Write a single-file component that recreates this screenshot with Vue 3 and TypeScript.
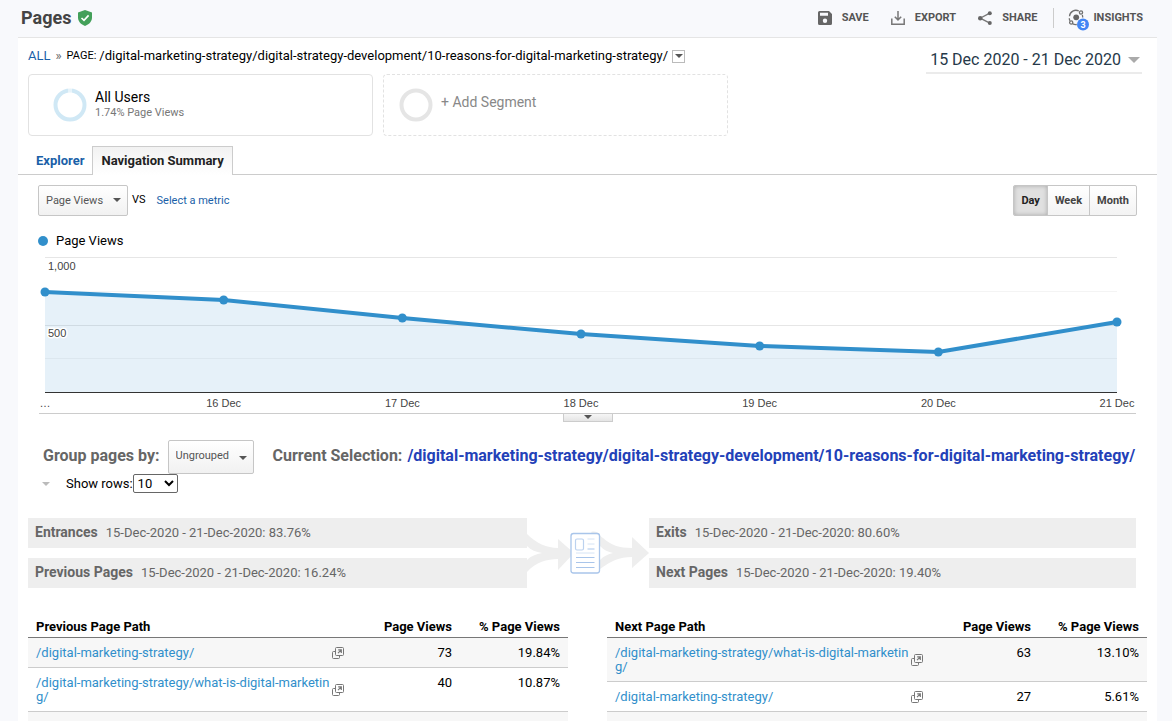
<script setup lang="ts">
import { ref } from 'vue'

interface PageRow {
  path: string
  views: string
  share: string
}

interface PathTable {
  title: string
  rows: PageRow[]
}

const pagePath = '/digital-marketing-strategy/digital-strategy-development/10-reasons-for-digital-marketing-strategy/'
const period = ref('Day')
const periods = ['Day', 'Week', 'Month']

const points = [
  { label: '…', y: 35 },
  { label: '16 Dec', y: 43 },
  { label: '17 Dec', y: 61 },
  { label: '18 Dec', y: 77 },
  { label: '19 Dec', y: 89 },
  { label: '20 Dec', y: 95 },
  { label: '21 Dec', y: 65 },
]
const steps = points.length - 1
const line = points.map((p, i) => `${i},${p.y}`).join(' ')
const area = `0,135 ${line} ${steps},135`
const xAt = (i: number): string => `${(i / steps) * 100}%`

const inbound = [
  { name: 'Entrances', value: '15-Dec-2020 - 21-Dec-2020: 83.76%' },
  { name: 'Previous Pages', value: '15-Dec-2020 - 21-Dec-2020: 16.24%' },
]
const outbound = [
  { name: 'Exits', value: '15-Dec-2020 - 21-Dec-2020: 80.60%' },
  { name: 'Next Pages', value: '15-Dec-2020 - 21-Dec-2020: 19.40%' },
]

const tables: PathTable[] = [
  {
    title: 'Previous Page Path',
    rows: [
      { path: '/digital-marketing-strategy/', views: '73', share: '19.84%' },
      { path: '/digital-marketing-strategy/what-is-digital-marketing/', views: '40', share: '10.87%' },
      { path: '', views: '', share: '' },
    ],
  },
  {
    title: 'Next Page Path',
    rows: [
      { path: '/digital-marketing-strategy/what-is-digital-marketing/', views: '63', share: '13.10%' },
      { path: '/digital-marketing-strategy/', views: '27', share: '5.61%' },
    ],
  },
]
</script>

<template>
  <div class="app">
    <header class="topbar">
      <h1>Pages</h1>
      <svg class="shield" width="16" height="18" viewBox="0 0 16 18">
        <path d="M8 1 15 3.6V8.500c0 4-3 7-7 8.500-4-1.500-7-4.500-7-8.500V3.600z" fill="#43a05a" />
        <path d="m4.500 9 2.500 2.400 4.600-5" fill="none" stroke="#fff" stroke-width="1.600" />
      </svg>
      <nav class="actions">
        <button type="button" class="action">
          <svg width="14" height="14" viewBox="0 0 14 14">
            <path fill-rule="evenodd" fill="#666" d="M1.500 0H11l3 3v9.500A1.500 1.500 0 0 1 12.500 14h-11A1.500 1.500 0 0 1 0 12.500v-11A1.500 1.500 0 0 1 1.500 0zM2 1.800v3h8v-3zM7 7.500a2.200 2.200 0 1 0 0 4.400 2.200 2.200 0 0 0 0-4.400z" />
          </svg>
          SAVE
        </button>
        <button type="button" class="action">
          <svg width="14" height="14" viewBox="0 0 14 14" fill="none" stroke="#777" stroke-width="1.500">
            <path d="M.8 7.500v5.700h12.400V7.500" />
            <path d="M7 0v8.500M3.800 5.700 7 8.900l3.200-3.200" />
          </svg>
          EXPORT
        </button>
        <button type="button" class="action">
          <svg width="14" height="14" viewBox="0 0 14 14">
            <path d="M11.800 2.200 2.200 7.200l9.600 4.900" fill="none" stroke="#777" stroke-width="1.300" />
            <g fill="#666">
              <circle cx="11.800" cy="2.200" r="2" />
              <circle cx="2.200" cy="7.200" r="2.200" />
              <circle cx="11.800" cy="12" r="2" />
            </g>
          </svg>
          SHARE
        </button>
        <button type="button" class="action insights">
          <svg width="22" height="22" viewBox="0 0 22 22">
            <g fill="none" stroke="#707070" stroke-width="1.300">
              <path d="M1.500 7.200A6.400 6.400 0 0 1 10.800 2M1.300 9.200a6.500 6.500 0 0 0 .6 2.500M4.800 14.900a6.200 6.200 0 0 0 4 .6M14.300 6a6.500 6.500 0 0 1 .4 2.500" />
              <circle cx="13" cy="3.500" r="1.600" />
              <circle cx="3.200" cy="13.500" r="1.600" />
            </g>
            <circle cx="8.200" cy="8.300" r="2.900" fill="#666" />
            <circle cx="15" cy="15.500" r="6" fill="#4285f4" />
            <text x="15" y="19" text-anchor="middle" class="count">3</text>
          </svg>
          INSIGHTS
        </button>
      </nav>
    </header>

    <main class="card">
      <div class="intro">
        <div class="intro-main">
          <div class="crumbs">
            <a href="#">ALL</a>
            <span class="sep">»</span>
            <span class="kind">PAGE:</span>
            <span>{{ pagePath }}</span>
            <button type="button" class="crumb-menu" aria-label="Change page"><i class="tri" /></button>
          </div>
          <div class="segments">
            <div class="segment">
              <svg width="34" height="34" viewBox="0 0 34 34">
                <circle cx="17" cy="17" r="14.500" fill="none" stroke="#d0e8f5" stroke-width="4" />
                <path d="M16 0v5M18 0v5" stroke="#fff" stroke-width="1" />
              </svg>
              <div class="segment-text">
                <div>All Users</div>
                <div class="segment-note">1.74% Page Views</div>
              </div>
            </div>
            <button type="button" class="segment add">
              <svg width="34" height="34" viewBox="0 0 34 34">
                <circle cx="17" cy="17" r="14.500" fill="none" stroke="#e5e5e5" stroke-width="4" />
              </svg>
              <span>+ Add Segment</span>
            </button>
          </div>
        </div>
        <button type="button" class="date">15 Dec 2020 - 21 Dec 2020<i class="tri" /></button>
      </div>

      <nav class="tabs">
        <a href="#" class="tab">Explorer</a>
        <a href="#" class="tab current">Navigation Summary</a>
      </nav>

      <div class="controls">
        <span class="picker">
          <select class="metric" aria-label="Metric"><option>Page Views</option></select>
        </span>
        <span class="vs">VS</span>
        <a href="#" class="compare">Select a metric</a>
        <div class="periods">
          <button v-for="p in periods" :key="p" type="button" :class="{ on: p === period }" @click="period = p">{{ p }}</button>
        </div>
      </div>

      <div class="legend"><i class="dot" />Page Views</div>

      <section class="chart">
        <svg class="plot" width="100%" height="154">
          <g>
            <line x1="0" x2="100%" y1=".5" y2=".5" stroke="#e6e6e6" />
            <line x1="0" x2="100%" y1="34.500" y2="34.500" stroke="#f4f4f4" />
            <line x1="0" x2="100%" y1="68.500" y2="68.500" stroke="#e6e6e6" />
            <line x1="0" x2="100%" y1="101.500" y2="101.500" stroke="#f4f4f4" />
          </g>
          <svg width="100%" height="135" :viewBox="`0 0 ${steps} 135`" preserveAspectRatio="none" overflow="visible">
            <polygon :points="area" fill="#318fcb" fill-opacity=".12" />
            <polyline :points="line" fill="none" stroke="#318fcb" stroke-width="4" vector-effect="non-scaling-stroke" />
          </svg>
          <line x1="0" x2="100%" y1="135.500" y2="135.500" stroke="#333" />
          <g v-for="(p, i) in points" :key="p.label">
            <circle :cx="xAt(i)" :cy="p.y" r="4.500" fill="#318fcb" />
            <text :x="xAt(i)" y="150" text-anchor="middle">{{ p.label }}</text>
          </g>
          <text class="halo" x="3" y="13">1,000</text>
          <text class="halo" x="3" y="80">500</text>
        </svg>
      </section>
      <div class="fold">
        <button type="button" aria-label="Expand chart"><i class="tri" /></button>
      </div>

      <div class="grouping">
        <label for="group">Group pages by:</label>
        <span class="picker tall">
          <select id="group"><option>Ungrouped</option></select>
        </span>
        <span class="selection-label">Current Selection:</span>
        <span class="selection">{{ pagePath }}</span>
      </div>
      <div class="rows-line">
        <i class="tri" />
        <label for="rows">Show rows:</label>
        <select id="rows"><option>10</option><option>25</option></select>
      </div>

      <section class="flow">
        <div class="bars inbound">
          <div v-for="b in inbound" :key="b.name" class="bar"><strong>{{ b.name }}</strong>{{ b.value }}</div>
        </div>
        <svg class="arrows" width="122" height="70" viewBox="0 0 122 70">
          <g fill="#eee">
            <path d="M0 16C9 25 20 30 31 30V21L47 35 31 52V41C20 41 9 44 0 54V42C4 38 9 36 15 35 9 34 4 32 0 28z" />
            <path d="M64 14C72 12 72 18 76 20 84 27 92 30 105 30V19L122 35 105 50V39C92 39 84 43 73 51V42C77 38 81 36 86 35 81 34 77 32 73 28z" />
          </g>
          <rect x="44" y="15.500" width="28.500" height="39.500" rx="2.500" fill="#fff" stroke="#a9c5ea" stroke-width="1.300" />
          <rect x="48.500" y="21" width="8" height="11" rx="1.500" fill="none" stroke="#bcd2ef" stroke-width="1.200" />
          <path d="M60.500 21h7M60.500 26h7M49 35h18.500" stroke="#d6e4f5" />
          <path d="M60.500 31h7M49 39.500h18.500M49 44.500h18.500M49 49.500h18.500" stroke="#a9c5ea" />
        </svg>
        <div class="bars outbound">
          <div v-for="b in outbound" :key="b.name" class="bar"><strong>{{ b.name }}</strong>{{ b.value }}</div>
        </div>
      </section>

      <section class="tables">
        <table v-for="t in tables" :key="t.title">
          <colgroup><col /><col class="c-icon" /><col class="c-num" /><col class="c-num" /></colgroup>
          <thead>
            <tr><th colspan="2">{{ t.title }}</th><th class="num">Page Views</th><th class="num">% Page Views</th></tr>
          </thead>
          <tbody>
            <tr v-for="r in t.rows" :key="r.path">
              <td class="path"><a v-if="r.path" href="#">{{ r.path }}</a></td>
              <td class="open">
                <svg width="12" height="12" viewBox="0 0 12 12" fill="none" stroke="#777">
                  <path d="M3.500 4.500h-2a1 1 0 0 0-1 1v5a1 1 0 0 0 1 1h5a1 1 0 0 0 1-1v-2" />
                  <rect x="3.500" y=".5" width="8" height="8" rx="1" />
                  <path d="M6 6.200 9 3.200M6.200 2.800h3.100v3.100" stroke-width="1.200" />
                </svg>
              </td>
              <td class="num">{{ r.views }}</td>
              <td class="num">{{ r.share }}</td>
            </tr>
            <tr v-if="t.rows.length < 3"><td colspan="4"></td></tr>
          </tbody>
        </table>
      </section>
    </main>
  </div>
</template>

<style>
body {
  margin: 0;
}
</style>

<style scoped>
.app {
  box-sizing: border-box;
  height: 100vh;
  overflow: hidden;
  padding: 0 15px 0 18px;
  background: #f8f9fc;
  color: #000;
  font: 13px/18px Roboto, "Liberation Sans", sans-serif;
}
button,
select {
  font-family: inherit;
  margin: 0;
}
a {
  color: #1a5fa8;
  text-decoration: none;
}
.tri {
  display: inline-block;
  width: 0;
  height: 0;
  border: 4px solid transparent;
  border-top-color: #555;
  border-bottom: 0;
}
.topbar {
  display: flex;
  align-items: center;
  height: 37px;
  padding: 0 14px 2px 3px;
  box-sizing: border-box;
}
h1 {
  margin: 0;
  font-size: 18px;
  line-height: 22px;
  font-weight: 700;
  color: #444;
}
.shield {
  margin-left: 6px;
}
.actions {
  display: flex;
  align-items: center;
  gap: 22px;
  margin-left: auto;
}
.action {
  display: flex;
  align-items: center;
  gap: 10px;
  padding: 0;
  border: 0;
  background: none;
  color: #555;
  font-size: 11px;
  line-height: 20px;
  font-weight: 700;
}
.insights {
  gap: 3px;
  margin-left: -6px;
  padding-left: 14px;
  border-left: 1px solid #ccc;
}
.insights svg {
  margin: 1px 0 -3px;
}
.count {
  fill: #fff;
  font-size: 9px;
  font-weight: 700;
}
.card {
  border-top: 1px solid #e5e5e5;
  background: #fff;
  min-height: 100vh;
}
.intro {
  display: flex;
  justify-content: space-between;
  align-items: flex-start;
  padding: 9px 15px 10px 10px;
}
.intro-main {
  flex: 1;
}
.crumbs {
  display: flex;
  align-items: center;
  height: 18px;
  white-space: nowrap;
}
.sep {
  margin: 0 5px;
  color: #666;
}
.kind {
  margin-right: 3px;
  font-size: 11px;
}
.crumb-menu {
  display: flex;
  align-items: center;
  justify-content: center;
  width: 13px;
  height: 13px;
  margin-left: 4px;
  padding: 0;
  border: 1px solid #bbb;
  background: #fff;
}
.segments {
  display: flex;
  gap: 10px;
  margin-top: 9px;
}
.segment {
  display: flex;
  align-items: flex-start;
  gap: 8px;
  box-sizing: border-box;
  width: 345px;
  height: 62px;
  padding: 13px 24px;
  border: 1px solid #e2e2e2;
  border-radius: 4px;
  background: #fff;
  font-size: 14px;
  line-height: 17px;
}
.segment-text {
  padding-top: 1px;
}
.segment-note {
  color: #777;
  font-size: 11px;
  line-height: 14px;
}
.add {
  padding-left: 15px;
  border-style: dashed;
  color: #888;
}
.add span {
  padding-top: 6px;
}
.date {
  display: flex;
  align-items: center;
  gap: 7px;
  padding: 3px 2px 3px 4px;
  border: 0;
  border-bottom: 2px solid #ebebeb;
  background: none;
  color: #263949;
  font-size: 16px;
  line-height: 19px;
}
.date .tri {
  border-width: 6px 6px 0;
  border-top-color: #aaa;
}
.tabs {
  display: flex;
  height: 28px;
  padding-left: 10px;
  border-bottom: 1px solid #ccc;
}
.tab {
  padding: 5px 8px;
  font-weight: 700;
  line-height: 19px;
}
.current {
  margin-bottom: -1px;
  border: 1px solid #ccc;
  border-bottom: 0;
  padding-top: 4px;
  background: linear-gradient(#f2f2f2, #fff);
  color: #222;
}
.controls {
  display: flex;
  align-items: center;
  padding: 10px 20px 0;
}
.picker {
  position: relative;
}
.picker select {
  appearance: none;
  box-sizing: border-box;
  display: block;
  width: 90px;
  height: 31px;
  padding: 0 7px;
  border: 1px solid #c6c6c6;
  border-radius: 2px;
  background: linear-gradient(#fff, #f1f1f1);
  color: #555;
  font-size: 11px;
}
.picker::after {
  content: "";
  position: absolute;
  right: 7px;
  top: 13px;
  border: 4px solid transparent;
  border-top-color: #555;
  border-bottom: 0;
  pointer-events: none;
}
.vs {
  margin: 0 11px 0 4px;
  padding-bottom: 2px;
  font-size: 11px;
}
.compare {
  font-size: 11px;
}
.periods {
  display: flex;
  margin-left: auto;
}
.periods button {
  height: 31px;
  margin-left: -1px;
  padding: 0 7px;
  border: 1px solid #c6c6c6;
  background: linear-gradient(#fff, #f3f3f3);
  color: #444;
  font-size: 11px;
  font-weight: 700;
}
.periods button:first-child {
  border-radius: 2px 0 0 2px;
}
.periods button:last-child {
  border-radius: 0 2px 2px 0;
}
.periods .on {
  background: #e0e0e0;
  box-shadow: inset 0 0 4px #aaa;
  color: #222;
}
.legend {
  display: flex;
  align-items: center;
  gap: 8px;
  margin: 16px 20px 0;
}
.dot {
  width: 10px;
  height: 10px;
  border-radius: 50%;
  background: #318fcb;
}
.chart {
  padding: 7px 40px 0 27px;
}
.plot {
  display: block;
  overflow: visible;
  fill: #444;
  font: 11px "Liberation Sans", Arial, sans-serif;
}
.halo {
  stroke: #fff;
  stroke-width: 3px;
  paint-order: stroke;
}
.fold {
  display: flex;
  justify-content: center;
  height: 9px;
  margin: 2px 21px 0;
  border-top: 1px solid #ccc;
}
.fold button {
  display: flex;
  justify-content: center;
  width: 50px;
  height: 8px;
  padding: 1px 0 0;
  border: 1px solid #ccc;
  border-top: 0;
  background: linear-gradient(#f6f6f6, #e4e4e4);
}
.grouping {
  display: flex;
  align-items: center;
  margin: 17px 0 0 25px;
  color: #666;
  font-size: 16px;
  font-weight: 700;
  line-height: 18px;
  white-space: nowrap;
}
.grouping label,
.selection-label,
.selection {
  padding-bottom: 2px;
}
.tall {
  margin-left: 8px;
}
.picker.tall select {
  width: 86px;
  height: 34px;
  padding-bottom: 4px;
}
.tall::after {
  top: 16px;
}
.selection-label {
  margin-left: 19px;
}
.selection {
  margin-left: 5px;
  color: #2341b8;
}
.rows-line {
  display: flex;
  align-items: center;
  height: 19px;
  margin-left: 24px;
}
.rows-line .tri {
  margin-right: 16px;
  border-top-color: #bbb;
}
.rows-line select {
  width: 45px;
  height: 19px;
  border: 1px solid #666;
  border-radius: 2px;
  background: #fff;
  color: #000;
  font-size: 13px;
}
.flow {
  display: flex;
  padding: 25px 21px 0 10px;
}
.bars {
  display: grid;
  gap: 10px;
}
.inbound {
  flex: 499;
}
.outbound {
  flex: 487;
}
.bar {
  box-sizing: border-box;
  height: 30px;
  padding-left: 7px;
  background: #eee;
  color: #666;
  line-height: 28px;
}
.bar strong {
  margin-right: 8px;
  font-size: 14px;
}
.tables {
  display: grid;
  grid-template-columns: 1fr 1fr;
  gap: 39px;
  align-items: start;
  padding: 30px 10px 0;
}
table {
  width: 100%;
  table-layout: fixed;
  border-collapse: collapse;
}
.c-icon {
  width: 22px;
}
.c-num {
  width: 108px;
}
th {
  padding: 0 8px 1px;
  border-bottom: 1px solid #777;
  line-height: 18px;
  text-align: left;
}
.num {
  text-align: right;
}
th.num {
  padding-left: 0;
}
td {
  height: 14px;
  padding: 8px 8px 7px;
  border-bottom: 1px solid #ccc;
  line-height: 14px;
  vertical-align: top;
}
tbody tr:nth-child(odd) {
  background: #f7f7f7;
}
.path {
  padding-right: 0;
  word-break: break-all;
}
.path a {
  color: #318fcb;
}
.open {
  padding: 0 2px;
  vertical-align: middle;
}
.open svg {
  display: block;
}
</style>
